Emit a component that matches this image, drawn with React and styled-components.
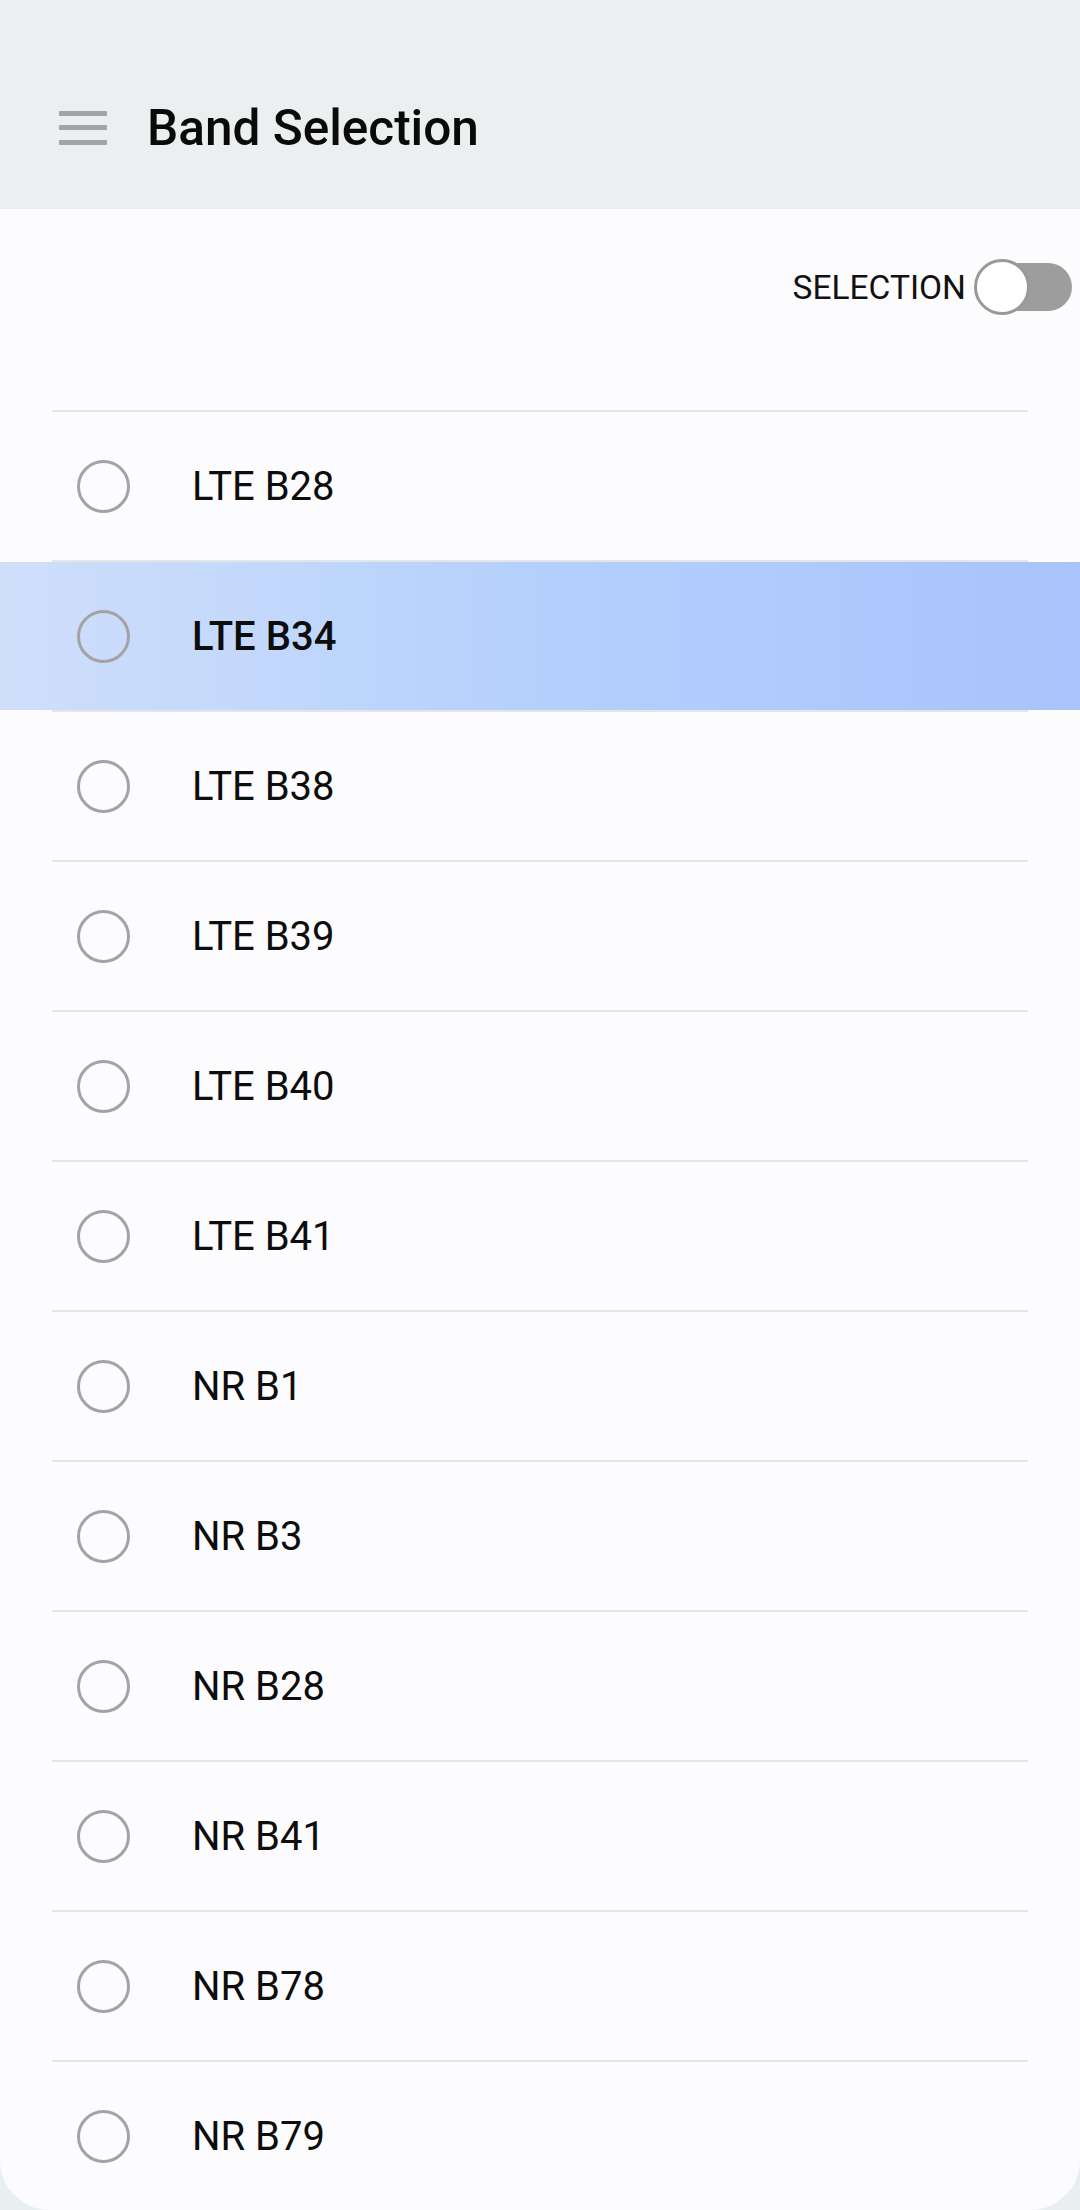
import React from 'react'
import styled, { createGlobalStyle } from 'styled-components'

const GlobalStyle = createGlobalStyle`
  html, body {
    margin: 0;
    padding: 0;
    background: #e9eff0;
    font-family: Roboto, "Liberation Sans", sans-serif;
    color: #111;
  }
  * { box-sizing: border-box; }
`

const Page = styled.div`
  width: 1080px;
  height: 2210px;
  display: flex;
  flex-direction: column;
  overflow: hidden;
`

const Header = styled.header`
  height: 209px;
  flex-shrink: 0;
  background: #eceff0;
  display: flex;
  align-items: center;
  padding: 46px 0 0 59px;
`

const Burger = styled.div`
  width: 48px;
  display: flex;
  flex-direction: column;
  gap: 9.5px;
  span {
    display: block;
    height: 5px;
    background: #a2a5a7;
    border-radius: 1px;
  }
`

const Title = styled.h1`
  margin: 0 0 0 40px;
  font-size: 49.5px;
  font-weight: 500;
  letter-spacing: 0;
  color: #0a0a0a;
`

const Card = styled.main`
  flex: 1;
  background: #fcfbfd;
  border-radius: 0 0 50px 50px;
  overflow: hidden;
`

const ToolRow = styled.div`
  height: 201px;
  padding: 0 8px 45px 0;
  display: flex;
  justify-content: flex-end;
  align-items: center;
`

const ToggleLabel = styled.span`
  font-size: 33.5px;
  color: #111;
  margin-right: 8px;
`

const Toggle = styled.div`
  position: relative;
  width: 98px;
  height: 56px;
  display: flex;
  align-items: center;
  justify-content: flex-end;
`

const Track = styled.div`
  width: 84px;
  height: 48px;
  border-radius: 24px;
  background: #9d9d9d;
`

const Thumb = styled.div`
  position: absolute;
  left: 0;
  top: 0;
  width: 56px;
  height: 56px;
  border-radius: 50%;
  background: #fff;
  border: 3px solid #999;
`

const Divider = styled.div`
  height: 2px;
  margin: 0 52px;
  background: #e5e5e9;
`

const Row = styled.div`
  height: 148px;
  display: flex;
  align-items: center;
  padding-left: 77px;
  background: ${p => p.active ? 'linear-gradient(to right, #cfdffa, #b5d0fd 50%, #a9c3fc)' : 'transparent'};
`

const Radio = styled.span`
  width: 53px;
  height: 53px;
  border-radius: 50%;
  border: 3px solid #a3a3a5;
  flex-shrink: 0;
`

const Label = styled.span`
  margin-left: 62px;
  font-size: 40px;
  font-weight: ${p => p.active ? 500 : 400};
  color: #0d0d0d;
`

const bands = [
  'LTE B28', 'LTE B34', 'LTE B38', 'LTE B39', 'LTE B40', 'LTE B41',
  'NR B1', 'NR B3', 'NR B28', 'NR B41', 'NR B78', 'NR B79'
]

export default function App () {
  return (
    <Page>
      <GlobalStyle />
      <Header>
        <Burger><span /><span /><span /></Burger>
        <Title>Band Selection</Title>
      </Header>
      <Card>
        <ToolRow>
          <ToggleLabel>SELECTION</ToggleLabel>
          <Toggle>
            <Track />
            <Thumb />
          </Toggle>
        </ToolRow>
        {bands.map(b => (
          <React.Fragment key={b}>
            <Divider />
            <Row active={b === 'LTE B34'}>
              <Radio />
              <Label active={b === 'LTE B34'}>{b}</Label>
            </Row>
          </React.Fragment>
        ))}
      </Card>
    </Page>
  )
}
